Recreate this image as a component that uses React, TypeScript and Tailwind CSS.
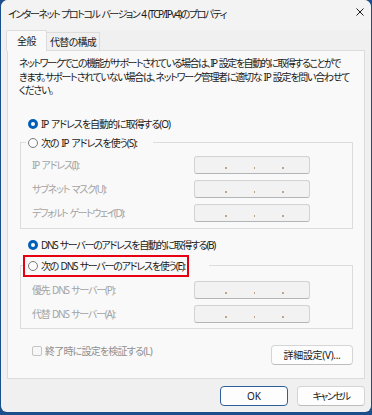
import React, { useLayoutEffect, useRef, useState } from "react";

function Fit({ w, children, className }: { w: number; children: string; className?: string }) {
  const ref = useRef<HTMLSpanElement>(null);
  const [ls, setLs] = useState<number | null>(null);
  useLayoutEffect(() => {
    const el = ref.current;
    if (!el) return;
    el.style.letterSpacing = "0px";
    const w0 = el.getBoundingClientRect().width;
    const n = Array.from(children).length;
    let v = (w - w0) / n;
    if (v < -2.2) v = -2.2;
    if (v > 1) v = 1;
    setLs(v);
  }, [children, w]);
  return (
    <span
      ref={ref}
      className={"inline-block whitespace-nowrap [word-spacing:1px] " + (className ?? "")}
      style={ls === null ? undefined : { letterSpacing: `${ls}px` }}
    >
      {children}
    </span>
  );
}

function Radio({ checked }: { checked?: boolean }) {
  if (checked) {
    return (
      <span className="w-[10px] h-[10px] rounded-full bg-[#005fb8] flex items-center justify-center shrink-0">
        <span className="w-[4px] h-[4px] rounded-full bg-white" />
      </span>
    );
  }
  return <span className="w-[10px] h-[10px] rounded-full border border-[#7a7a7a] bg-[#fbfbfb] shrink-0" />;
}

function IpBox() {
  return (
    <div className="w-[116px] h-[18px] rounded-[3px] border border-[#d2d2d2] border-b-[#b4b4b4] bg-[#f2f2f2] flex items-end pb-[4px] pl-[30px] gap-[27px]">
      <span className="w-[1.5px] h-[1.5px] bg-[#c0a488]" />
      <span className="w-[1.5px] h-[1.5px] bg-[#c0a488]" />
      <span className="w-[1.5px] h-[1.5px] bg-[#c0a488]" />
    </div>
  );
}

function Row({ label, w }: { label: string; w: number }) {
  return (
    <div className="flex items-center">
      <div className="w-[173px] pl-[11px] text-[#a3a3a3] leading-[14px]">
        <Fit w={w}>{label}</Fit>
      </div>
      <IpBox />
    </div>
  );
}

export default function App() {
  return (
    <div className="w-[372px] h-[415px] bg-[#1b4f8c] pl-px pr-px pb-[3px] font-['Noto_Sans','Noto_Sans_CJK_JP',sans-serif] [font-feature-settings:'palt'] text-[10px] text-[#1a1a1a]">
      <div className="h-full bg-[#f0f0f0] rounded-t-[7px] rounded-b-[6px] flex flex-col">
        {/* title bar */}
        <div className="h-[30px] flex items-start justify-between pl-[7px] pr-[7px] bg-[#f3f3f3] rounded-t-[7px]">
          <span className="mt-[7px] leading-[14px]">
            <Fit w={218}>インターネット プロトコル バージョン 4 (TCP/IPv4)のプロパティ</Fit>
          </span>
          <svg className="mt-[8px]" width="8" height="8" viewBox="0 0 8 8">
            <path d="M0.5 0.5 L7.5 7.5 M7.5 0.5 L0.5 7.5" stroke="#1a1a1a" strokeWidth="1" fill="none" />
          </svg>
        </div>

        {/* tabs */}
        <div className="flex items-end ml-[5px] -mb-px relative z-10">
          <div className="h-[21px] w-[41px] bg-[#f9f9f9] border border-b-0 border-[#dcdcdc] rounded-t-[2px] flex items-center justify-center leading-[14px]">
            <Fit w={19}>全般</Fit>
          </div>
          <div className="h-[18px] w-[53px] border border-b-0 border-l-0 border-[#dcdcdc] flex items-center justify-center leading-[14px] mb-px">
            <Fit w={46}>代替の構成</Fit>
          </div>
        </div>

        {/* panel */}
        <div className="ml-[6px] w-[358px] h-[329px] border border-[#dcdcdc] bg-[#f9f9f9] flex flex-col">
          <div className="pl-[11px] pt-[6px] leading-[13.5px] flex flex-col items-start">
            <Fit w={321}>ネットワークでこの機能がサポートされている場合は、IP 設定を自動的に取得することがで</Fit>
            <Fit w={330}>きます。サポートされていない場合は、ネットワーク管理者に適切な IP 設定を問い合わせて</Fit>
            <Fit w={34}>ください。</Fit>
          </div>

          <div className="mt-[19px] ml-[20px] flex items-center gap-[3px] leading-[14px]">
            <Radio checked />
            <Fit w={129}>IP アドレスを自動的に取得する(O)</Fit>
          </div>

          <fieldset className="mt-[5px] ml-[12px] w-[333px] border border-[#dcdcdc]">
            <legend className="ml-[5px] pl-[2px] pr-[16px]">
              <div className="flex items-center gap-[3px] leading-[14px]">
                <Radio />
                <Fit w={96}>次の IP アドレスを使う(S):</Fit>
              </div>
            </legend>
            <div className="pt-[6px] pb-[6px] flex flex-col gap-[6px]">
              <Row label="IP アドレス(I):" w={47} />
              <Row label="サブネット マスク(U):" w={74} />
              <Row label="デフォルト ゲートウェイ(D):" w={92} />
            </div>
          </fieldset>

          <div className="mt-[9px] ml-[20px] flex items-center gap-[3px] leading-[14px]">
            <Radio checked />
            <Fit w={174}>DNS サーバーのアドレスを自動的に取得する(B)</Fit>
          </div>

          <fieldset className="mt-[3px] ml-[12px] w-[333px] border border-[#dcdcdc]">
            <legend className="ml-[2px] pr-[20px]">
              <div className="h-[22px] w-[166px] border-2 border-[#e60012] pl-[3px] flex items-center gap-[3px] leading-[14px]">
                <Radio />
                <Fit w={144}>次の DNS サーバーのアドレスを使う(E):</Fit>
              </div>
            </legend>
            <div className="pt-[4px] pb-[5px] flex flex-col gap-[6px]">
              <Row label="優先 DNS サーバー(P):" w={83} />
              <Row label="代替 DNS サーバー(A):" w={83} />
            </div>
          </fieldset>

          <div className="mt-[15px] ml-[12px] w-[333px] flex items-start justify-between">
            <div className="pl-[12px] flex items-center gap-[3px] leading-[14px]">
              <span className="w-[10px] h-[10px] rounded-[2px] border border-[#c4c4c4] bg-[#f7f7f7]" />
              <Fit w={107} className="text-[#8f8f8f]">終了時に設定を検証する(L)</Fit>
            </div>
            <button className="mt-px h-[20px] w-[82px] rounded-[4px] border border-[#d5d5d5] border-b-[#bdbdbd] bg-[#fdfdfd] leading-[14px] flex items-center justify-center">
              <Fit w={57}>詳細設定(V)...</Fit>
            </button>
          </div>
        </div>

        {/* bottom buttons */}
        <div className="mt-[7px] pr-[6px] flex justify-end gap-[9px]">
          <button className="h-[20px] w-[68px] rounded-[4px] border border-[#2d5f9a] bg-[#fdfdfd] leading-[14px] flex items-center justify-center">
            <Fit w={14}>OK</Fit>
          </button>
          <button className="h-[20px] w-[68px] rounded-[4px] border border-[#d5d5d5] border-b-[#bdbdbd] bg-[#fdfdfd] leading-[14px] flex items-center justify-center">
            <Fit w={37}>キャンセル</Fit>
          </button>
        </div>
      </div>
    </div>
  );
}
